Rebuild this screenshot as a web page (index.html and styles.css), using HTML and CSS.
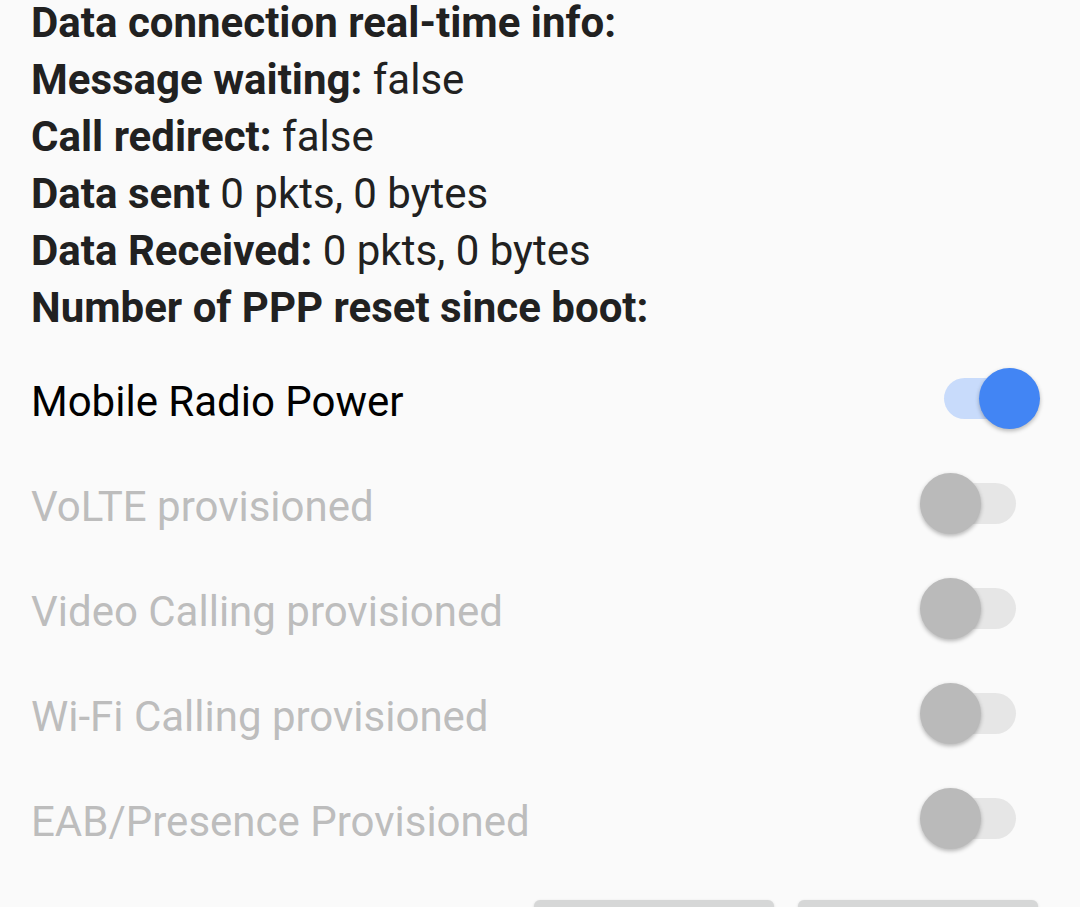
FILE: index.html
```html
<!DOCTYPE html>
<html>
<head>
<meta charset="utf-8">
<link rel="stylesheet" href="styles.css">
</head>
<body>
<div class="screen">
  <div class="info">
    <div class="line first"><b>Data connection real-time info:</b></div>
    <div class="line"><b>Message waiting:</b> false</div>
    <div class="line"><b>Call redirect:</b> false</div>
    <div class="line"><b>Data sent</b> 0 pkts, 0 bytes</div>
    <div class="line"><b>Data Received:</b> 0 pkts, 0 bytes</div>
    <div class="line"><b>Number of PPP reset since boot:</b></div>
  </div>
  <div class="switches">
    <div class="row">
      <span class="label">Mobile Radio Power</span>
      <span class="switch on"><span class="track"></span><span class="thumb"></span></span>
    </div>
    <div class="row disabled">
      <span class="label">VoLTE provisioned</span>
      <span class="switch"><span class="track"></span><span class="thumb"></span></span>
    </div>
    <div class="row disabled">
      <span class="label">Video Calling provisioned</span>
      <span class="switch"><span class="track"></span><span class="thumb"></span></span>
    </div>
    <div class="row disabled">
      <span class="label">Wi-Fi Calling provisioned</span>
      <span class="switch"><span class="track"></span><span class="thumb"></span></span>
    </div>
    <div class="row disabled">
      <span class="label">EAB/Presence Provisioned</span>
      <span class="switch"><span class="track"></span><span class="thumb"></span></span>
    </div>
  </div>
  <div class="buttons">
    <div class="btn"></div>
    <div class="btn"></div>
  </div>
</div>
</body>
</html>
```

FILE: styles.css
```css
html, body {
  margin: 0;
  padding: 0;
  background: #fafafa;
  overflow: hidden;
}
.screen {
  width: 1080px;
  height: 907px;
  overflow: hidden;
  font-family: Roboto, "Noto Sans", sans-serif;
}
.info {
  padding-left: 31px;
  color: #212121;
  font-size: 42px;
  line-height: 57px;
}
.info .first {
  line-height: 45px;
  padding-bottom: 6px;
}
.info b {
  font-weight: 700;
}
.switches {
  margin-top: 11px;
}
.row {
  height: 105px;
  display: flex;
  align-items: center;
  justify-content: space-between;
  padding: 0 64px 0 31px;
}
.label {
  font-size: 42px;
  color: #000;
  padding-top: 3px;
}
.row.disabled .label {
  color: #bdbdbd;
}
.switch {
  position: relative;
  width: 72px;
  height: 41px;
  margin-top: -2px;
}
.track {
  display: block;
  width: 72px;
  height: 41px;
  border-radius: 21px;
  background: #e6e6e6;
}
.thumb {
  position: absolute;
  top: -10px;
  left: -24px;
  width: 61px;
  height: 61px;
  border-radius: 50%;
  background: #bababa;
  box-shadow: 0 2px 4px rgba(0, 0, 0, 0.28);
}
.switch.on .track {
  background: #c8dbfb;
}
.switch.on .thumb {
  left: 35px;
  background: #4285f4;
}
.buttons {
  display: flex;
  justify-content: flex-end;
  gap: 24px;
  padding-right: 42px;
  margin-top: 28px;
}
.btn {
  width: 240px;
  height: 60px;
  border-radius: 6px;
  background: #d6d7d7;
  box-shadow: 0 1px 3px rgba(0, 0, 0, 0.15);
}
```
